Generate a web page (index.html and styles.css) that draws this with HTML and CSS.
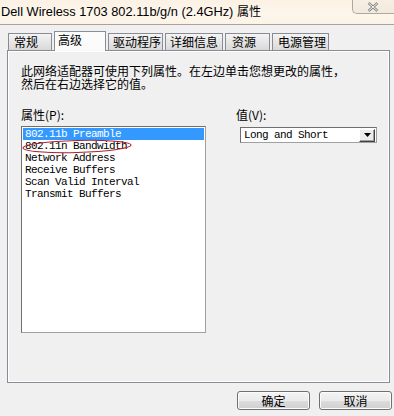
FILE: index.html
```html
<!DOCTYPE html>
<html lang="zh">
<head>
<meta charset="utf-8">
<link rel="stylesheet" href="styles.css">
</head>
<body>
<div class="window">
  <div class="titlebar">
    <span class="title">Dell Wireless 1703 802.11b/g/n (2.4GHz) <span class="cjk">属性</span></span>
    <span class="close">
      <svg width="12" height="10" viewBox="0 0 12 10"><path d="M1.5 1 L10.5 9 M10.5 1 L1.5 9" stroke="#8a8a8a" stroke-width="2.6" fill="none"/><path d="M1.5 1 L10.5 9 M10.5 1 L1.5 9" stroke="#f4f0ea" stroke-width="1" fill="none"/></svg>
    </span>
  </div>
  <div class="tabs">
    <div class="tab t-general">常规</div>
    <div class="tab t-adv active">高级</div>
    <div class="tab t-driver">驱动程序</div>
    <div class="tab t-detail">详细信息</div>
    <div class="tab t-res">资源</div>
    <div class="tab t-power">电源管理</div>
  </div>
  <div class="panel">
    <div class="intro">
      <div class="intro-line">此网络适配器可使用下列属性。在左边单击您想更改的属性，</div>
      <div class="intro-line">然后在右边选择它的值。</div>
    </div>
    <div class="cols">
      <div class="col-left">
        <div class="label">属性(P):</div>
        <ul class="listbox">
          <li class="selected">802.11b Preamble</li>
          <li>802.11n Bandwidth</li>
          <li>Network Address</li>
          <li>Receive Buffers</li>
          <li>Scan Valid Interval</li>
          <li>Transmit Buffers</li>
        </ul>
      </div>
      <div class="col-right">
        <div class="label">值(V):</div>
        <div class="select">
          <span class="select-text">Long and Short</span>
          <span class="select-btn"><svg width="7" height="4" viewBox="0 0 7 4"><path d="M0 0 H7 L3.5 4 Z" fill="#000"/></svg></span>
        </div>
      </div>
    </div>
  </div>
  <div class="buttons">
    <button class="btn">确定</button>
    <button class="btn">取消</button>
  </div>
  <svg class="annot" width="394" height="416" viewBox="0 0 394 416">
    <ellipse cx="79" cy="41.5" rx="22" ry="8.5" fill="none" stroke="#b0202a" stroke-width="1"/>
    <ellipse cx="77" cy="146.5" rx="54" ry="6" transform="rotate(-1.5 77 146.5)" fill="none" stroke="#b0202a" stroke-width="1"/>
  </svg>
</div>
</body>
</html>
```
FILE: styles.css
```css
* { box-sizing: border-box; }
html, body {
  margin: 0;
  padding: 0;
  background: #f0f0f0;
}
.window {
  position: relative;
  width: 394px;
  height: 416px;
  overflow: hidden;
  background: #f0f0f0;
  font-family: "Noto Sans CJK SC", "Liberation Sans", sans-serif;
  font-size: 12px;
  color: #000;
}
.titlebar {
  display: flex;
  height: 25px;
  border-bottom: 1px solid #a7a39c;
  background: linear-gradient(#fbf2e4, #fdf6ec 60%, #fcf3e6);
}
.title {
  padding: 3px 0 0 1px;
  font-family: "Liberation Sans", "Noto Sans CJK SC", sans-serif;
  font-size: 12.8px;
  line-height: 15px;
  color: #000;
  white-space: nowrap;
}
.title .cjk {
  font-family: "Noto Sans CJK SC", sans-serif;
  font-size: 12px;
}
.close {
  margin-left: auto;
  margin-top: -1px;
  width: 42px;
  height: 15px;
  border: 1px solid #b3a898;
  border-right: none;
  border-radius: 0 0 0 5px;
  background: linear-gradient(#f8efe3, #f1e9de);
  display: flex;
  align-items: center;
  padding-left: 14px;
}
.close svg { display: block; }

.tabs {
  display: flex;
  gap: 2px;
  height: 19px;
  margin-top: 6px;
  padding-left: 8px;
  align-items: flex-start;
  position: relative;
  z-index: 1;
}
.tab {
  margin-top: 2px;
  height: 17px;
  border: 1px solid #898c95;
  border-bottom: none;
  background: linear-gradient(#f4f4f4, #e6e6e6 50%, #d9d9d9);
  padding-left: 5px;
  line-height: 15px;
  white-space: nowrap;
}
.tab.active {
  margin-top: 0;
  height: 20px;
  background: #fbfbfb;
  padding-left: 3px;
  line-height: 16px;
}
.t-general { width: 44px; }
.t-adv { width: 52px; }
.t-driver { width: 55px; padding-left: 4px; }
.t-detail { width: 58px; padding-left: 4px; }
.t-res { width: 45px; padding-left: 6px; }
.t-power { width: 57px; }

.panel {
  margin-left: 7px;
  width: 383px;
  height: 333px;
  border: 1px solid #898c95;
  box-shadow: inset 1px 1px 0 #ffffff, inset -1px -1px 0 #ffffff;
  padding: 13px 0 0 13px;
}
.intro {
  display: flex;
  flex-direction: column;
}
.intro-line {
  height: 13px;
  line-height: 13px;
  white-space: nowrap;
}
.cols {
  display: flex;
  gap: 30px;
  margin-top: 18px;
}
.col-left { width: 185px; }
.col-right { width: 141px; }
.label {
  line-height: 13px;
}
.listbox {
  list-style: none;
  margin: 5px 0 0 0;
  padding: 1px;
  height: 207px;
  background: #fff;
  border: 1px solid #a0a0a0;
  border-top-color: #6f6f6f;
  border-left-color: #6f6f6f;
  font-family: "Liberation Mono", monospace;
  font-size: 11px;
  letter-spacing: -0.6px;
}
.listbox li {
  height: 12px;
  line-height: 12px;
  padding-left: 2px;
  white-space: nowrap;
}
.listbox li.selected {
  background: #3399ff;
  color: #fff;
}
.select {
  margin: 6px 0 0 4px;
  width: 137px;
  height: 16px;
  display: flex;
  align-items: center;
  background: #fff;
  border: 1px solid #a0a0a0;
  border-top-color: #6f6f6f;
  border-left-color: #6f6f6f;
  padding: 0 1px 0 3px;
}
.select-text {
  font-family: "Liberation Mono", monospace;
  font-size: 11px;
  letter-spacing: -0.6px;
  line-height: 12px;
  white-space: nowrap;
}
.select-btn {
  margin-left: auto;
  width: 16px;
  height: 13px;
  display: flex;
  align-items: center;
  justify-content: center;
  background: #ececec;
  border: 1px solid #fff;
  border-right-color: #404040;
  border-bottom-color: #404040;
  box-shadow: inset -1px -1px 0 #a0a0a0;
}
.select-btn svg { display: block; }

.buttons {
  display: flex;
  justify-content: flex-end;
  gap: 9px;
  margin-top: 8px;
  padding-right: 2px;
}
.btn {
  width: 73px;
  height: 19px;
  margin: 0;
  padding: 0;
  border: 1px solid #707070;
  border-radius: 3px;
  background: linear-gradient(#f4f4f4, #ebebeb 50%, #dddddd 51%, #cfcfcf);
  box-shadow: inset 0 0 0 1px #fcfcfc;
  font-family: "Noto Sans CJK SC", sans-serif;
  font-size: 12px;
  line-height: 15px;
  color: #000;
}
.annot {
  position: absolute;
  left: 0;
  top: 0;
  pointer-events: none;
}
```
